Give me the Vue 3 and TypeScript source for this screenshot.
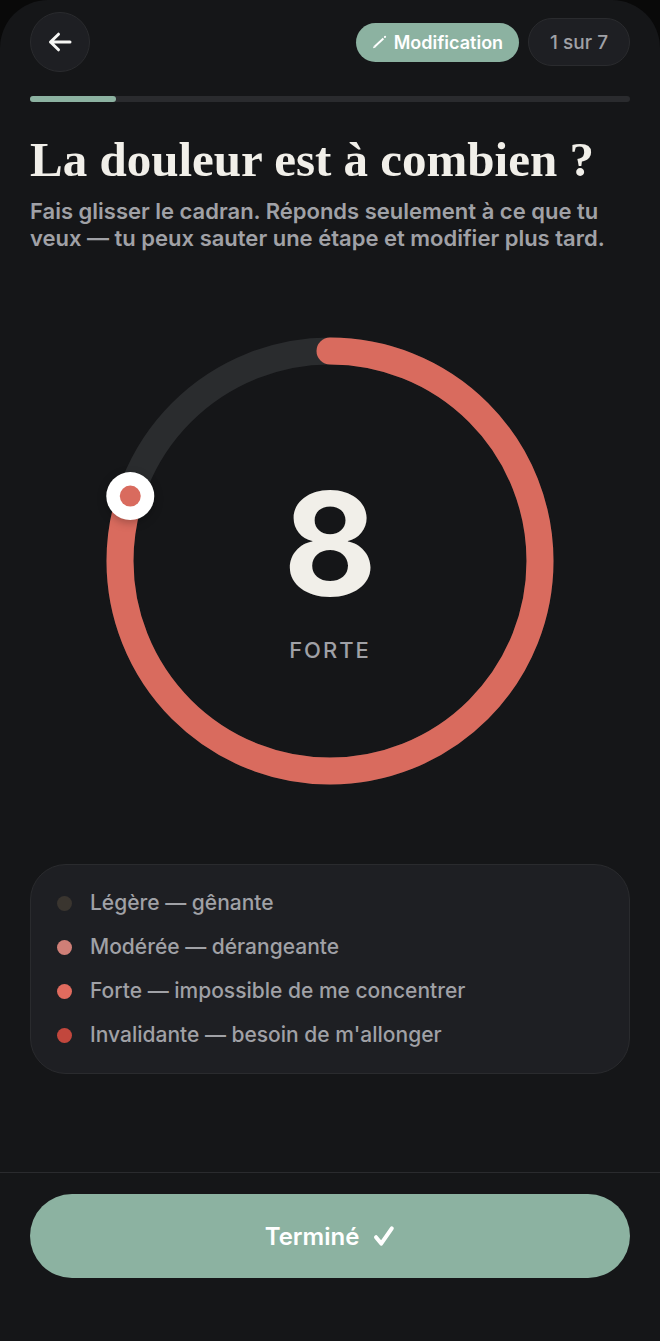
<script setup lang="ts">
import { computed, ref } from 'vue'

interface Level {
  label: string
  tone: string
}

const levels: Level[] = [
  { label: 'Légère — gênante', tone: 'mild' },
  { label: 'Modérée — dérangeante', tone: 'moderate' },
  { label: 'Forte — impossible de me concentrer', tone: 'strong' },
  { label: "Invalidante — besoin de m'allonger", tone: 'severe' },
]

const step = 1
const stepCount = 7
const pain = ref(8)
const radius = 210
const center = 240

const circumference = 2 * Math.PI * radius
const dash = computed(() => `${(circumference * pain.value) / 10} ${circumference}`)
const knob = computed(() => {
  const angle = (pain.value / 10) * 2 * Math.PI
  return {
    x: center + radius * Math.sin(angle),
    y: center - radius * Math.cos(angle),
  }
})
const intensity = computed(() => {
  if (pain.value <= 3) return 'Légère'
  if (pain.value <= 6) return 'Modérée'
  if (pain.value <= 8) return 'Forte'
  return 'Invalidante'
})
</script>

<template>
  <div class="sheet">
    <header class="top">
      <button class="back" type="button" aria-label="Retour">
        <svg width="30" height="30" viewBox="0 0 30 30" aria-hidden="true">
          <path d="M25 15H5.500M13.500 7.200L5.500 15l8 7.800" />
        </svg>
      </button>
      <div class="badges">
        <span class="badge edit">
          <svg width="16" height="16" viewBox="0 0 16 16" aria-hidden="true">
            <path class="shaft" d="M2.800 12.400L11.400 4.400" />
            <path class="tip" d="M1 14.200l1-2.600 1.700 1.800z" />
            <path class="cap" d="M12.900 3l.2-.2" />
          </svg>
          Modification
        </span>
        <span class="badge count">{{ step }} sur {{ stepCount }}</span>
      </div>
    </header>

    <div class="progress" role="progressbar" aria-label="Progression" :aria-valuenow="step" aria-valuemin="0" :aria-valuemax="stepCount">
      <div class="progress-fill" :style="{ width: `${(step / stepCount) * 100}%` }"></div>
    </div>

    <main class="content">
      <h1>La douleur est à combien ?</h1>
      <p class="intro">
        Fais glisser le cadran. Réponds seulement à ce que tu veux — tu peux sauter une étape et modifier plus tard.
      </p>

      <div class="dial">
        <svg class="ring" viewBox="0 0 480 480" aria-hidden="true">
          <circle class="track" :cx="center" :cy="center" :r="radius" />
          <circle class="arc" :cx="center" :cy="center" :r="radius" :stroke-dasharray="dash" transform="rotate(-90 240 240)" />
          <circle class="knob" :cx="knob.x" :cy="knob.y" r="24" />
          <circle class="knob-dot" :cx="knob.x" :cy="knob.y" r="10.500" />
        </svg>
        <div class="reading">
          <output class="value" for="pain">{{ pain }}</output>
          <span class="intensity">{{ intensity }}</span>
        </div>
        <input id="pain" v-model.number="pain" class="slider" type="range" min="0" max="10" aria-label="Intensité de la douleur" />
      </div>

      <ul class="levels">
        <li v-for="level in levels" :key="level.tone">
          <span class="dot" :class="level.tone"></span>
          {{ level.label }}
        </li>
      </ul>
    </main>

    <footer class="actions">
      <button class="done" type="button">
        Terminé
        <svg width="22" height="22" viewBox="0 0 22 22" aria-hidden="true">
          <path d="M3 12.200l5.200 6.400L18.800 3.400" />
        </svg>
      </button>
    </footer>
  </div>
</template>

<style>
body {
  margin: 0;
  background: #090909;
}
</style>

<style scoped>
.sheet {
  box-sizing: border-box;
  display: flex;
  flex-direction: column;
  min-height: 100vh;
  padding-top: 12px;
  border-radius: 48px 48px 0 0;
  background: #151618;
  color: #a0a1a6;
  font-family: Inter, "Liberation Sans", sans-serif;
  font-weight: 500;
}

.top {
  display: flex;
  align-items: center;
  justify-content: space-between;
  padding: 0 30px;
}

.back {
  display: grid;
  place-items: center;
  width: 60px;
  height: 60px;
  padding: 0;
  border: 1px solid #2a2b2e;
  border-radius: 50%;
  background: #1e1f23;
}

.back path {
  fill: none;
  stroke: #f7f7f5;
  stroke-width: 3;
  stroke-linecap: round;
  stroke-linejoin: round;
}

.badges {
  display: flex;
  align-items: center;
  gap: 9px;
}

.badge {
  display: flex;
  align-items: center;
  box-sizing: border-box;
  border-radius: 24px;
  white-space: nowrap;
}

.edit {
  gap: 6px;
  height: 39px;
  padding: 0 16px;
  background: #8cb2a1;
  color: #ffffff;
  font-size: 18px;
  font-weight: 600;
}

.edit path {
  fill: none;
  stroke: #ffffff;
  stroke-width: 2;
}

.edit .tip {
  fill: #ffffff;
  stroke: none;
}

.edit .cap {
  stroke-linecap: round;
}

.count {
  height: 48px;
  padding: 0 21px;
  border: 1px solid #2a2b2e;
  background: #1e1f23;
  font-size: 19px;
}

.progress {
  height: 6px;
  margin: 24px 30px 0;
  border-radius: 3px;
  background: #2a2b2e;
}

.progress-fill {
  height: 100%;
  border-radius: 3px;
  background: #8cb2a1;
}

.content {
  padding: 0 30px;
}

h1 {
  margin: 30px 0 0;
  color: #f1efe9;
  font-family: "Liberation Serif", serif;
  font-size: 49px;
  font-weight: 700;
  line-height: 56px;
}

.intro {
  margin: 10px 0 0;
  font-size: 22px;
  font-weight: 600;
  line-height: 27px;
}

.dial {
  position: relative;
  display: grid;
  place-items: center;
  max-width: 480px;
  margin: 69px auto 0;
}

.ring,
.reading {
  grid-area: 1 / 1;
}

.ring {
  display: block;
  width: 100%;
}

.ring circle {
  fill: none;
  stroke-width: 27;
}

.ring .track {
  stroke: #2a2c2e;
}

.ring .arc {
  stroke: #d96b5e;
  stroke-linecap: round;
}

.ring .knob {
  fill: #ffffff;
  filter: drop-shadow(0 3px 4px rgba(0, 0, 0, 0.25));
}

.ring .knob-dot {
  fill: #d96b5e;
}

.reading {
  display: flex;
  flex-direction: column;
  align-items: center;
  gap: 20px;
  padding-top: 14px;
}

.value {
  color: #f1efe9;
  font-size: 144px;
  font-weight: 700;
  line-height: 144px;
}

.intensity {
  font-size: 22px;
  line-height: 28px;
  letter-spacing: 2px;
  text-transform: uppercase;
}

.slider {
  position: absolute;
  inset: 0;
  width: 100%;
  height: 100%;
  margin: 0;
  opacity: 0;
  cursor: grab;
}

.levels {
  display: flex;
  flex-direction: column;
  gap: 18px;
  margin: 63px 0 0;
  padding: 25px 26px;
  border: 1px solid #2a2b2e;
  border-radius: 36px;
  background: #1e1f23;
  list-style: none;
  font-size: 21px;
  line-height: 26px;
}

.levels li {
  display: flex;
  align-items: center;
  gap: 18px;
}

.dot {
  flex: none;
  width: 15px;
  height: 15px;
  border-radius: 50%;
}

.mild {
  background: #3a352f;
}

.moderate {
  background: #cf7f77;
}

.strong {
  background: #e06b5e;
}

.severe {
  background: #c2473d;
}

.actions {
  margin-top: auto;
  padding: 21px 30px 63px;
  border-top: 1px solid #2a2b2e;
}

.done {
  display: flex;
  align-items: center;
  justify-content: center;
  gap: 14px;
  width: 100%;
  height: 84px;
  padding: 0;
  border: 0;
  border-radius: 42px;
  background: #8cb2a1;
  color: #ffffff;
  font-family: inherit;
  font-size: 24px;
  font-weight: 600;
}

.done path {
  fill: none;
  stroke: #ffffff;
  stroke-width: 4;
  stroke-linecap: round;
  stroke-linejoin: round;
}
</style>
